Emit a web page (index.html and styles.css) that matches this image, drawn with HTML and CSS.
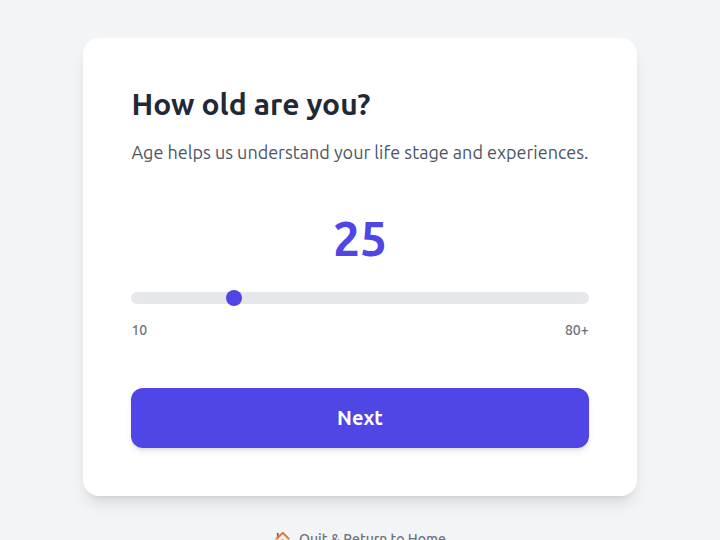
FILE: index.html
```html
<!DOCTYPE html>
<html lang="en">

<head>
  <meta charset="UTF-8">
  <title>Age</title>
  <link rel="stylesheet" href="styles.css">
</head>

<body>
  <div class="page">
    <div class="card">
      <h1 class="title">How old are you?</h1>
      <p class="desc">Age helps us understand your life stage and experiences.</p>
      <div class="age">25</div>
      <div class="track">
        <span class="thumb"></span>
      </div>
      <div class="range">
        <span>10</span>
        <span>80+</span>
      </div>
      <a href="#" class="next">Next</a>
    </div>
    <a href="#" class="quit"><span>🏠</span><span>Quit &amp; Return to Home</span></a>
  </div>
</body>

</html>
```

FILE: styles.css
```css
* {
  box-sizing: border-box;
}

html {
  background: #f3f4f6;
}

body {
  margin: 0;
  font-family: Ubuntu, "Noto Sans", sans-serif;
  color: #1f2937;
  text-rendering: optimizeLegibility;
}

.page {
  display: flex;
  flex-direction: column;
  align-items: center;
  padding-top: 38px;
}

.card {
  width: 553.2px;
  padding: 48px;
  background: #fff;
  border-radius: 16px;
  box-shadow: 0 10px 15px -3px rgba(0, 0, 0, 0.1), 0 4px 6px -4px rgba(0, 0, 0, 0.1);
}

.title {
  margin: 0 0 16px;
  font-size: 30px;
  line-height: 36px;
  font-weight: 700;
}

.desc {
  margin: 0 0 48px;
  font-size: 18px;
  line-height: 28px;
  color: #4b5563;
  white-space: nowrap;
}

.age {
  margin-bottom: 30px;
  text-align: center;
  font-size: 48px;
  line-height: 48px;
  font-weight: 700;
  color: #4f46e5;
}

.track {
  position: relative;
  height: 12px;
  border-radius: 6px;
  background: #e5e7eb;
}

.thumb {
  position: absolute;
  left: 95px;
  top: -2px;
  width: 16px;
  height: 16px;
  border-radius: 50%;
  background: #4f46e5;
}

.range {
  display: flex;
  justify-content: space-between;
  margin-top: 16px;
  font-size: 14px;
  line-height: 20px;
  font-weight: 500;
  color: #6b7280;
}

.next {
  display: block;
  margin-top: 48px;
  height: 60px;
  border-radius: 12px;
  background: #4f46e5;
  color: #fff;
  text-align: center;
  text-decoration: none;
  font-size: 20px;
  line-height: 60px;
  font-weight: 700;
  box-shadow: 0 4px 6px -1px rgba(0, 0, 0, 0.1), 0 2px 4px -2px rgba(0, 0, 0, 0.1);
}

.quit {
  display: flex;
  align-items: center;
  gap: 8px;
  margin-top: 33px;
  font-size: 14px;
  line-height: 20px;
  font-weight: 500;
  color: #6b7280;
  text-decoration: none;
}
```
